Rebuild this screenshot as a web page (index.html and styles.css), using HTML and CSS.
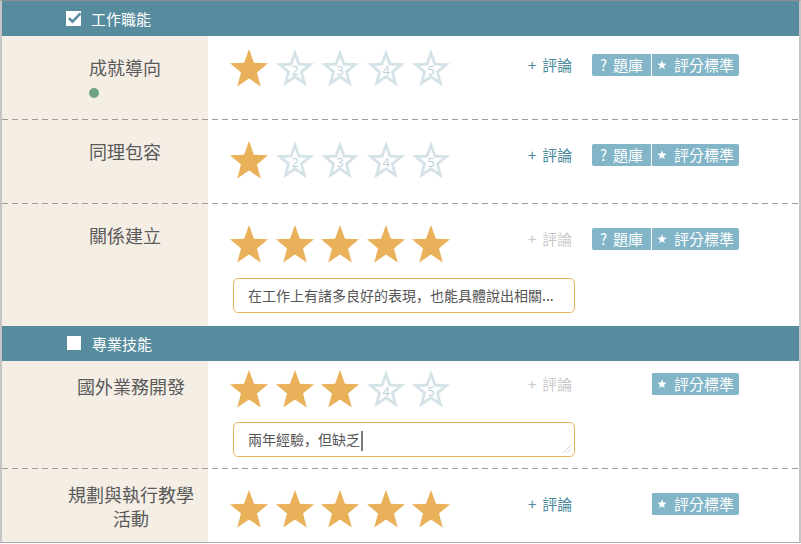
FILE: index.html
```html
<!DOCTYPE html>
<html>
  <head>
    <title>能力評分</title>
    <link rel="stylesheet" href="styles.css">
  </head>
  <body>
    <svg class="defs" aria-hidden="true">
      <defs>
        <path id="star-shape" d="M19 0.5 L23.7 13.03 L37.07 13.63 L26.61 21.97 L30.17 34.87 L19 27.5 L7.83 34.87 L11.39 21.97 L0.93 13.63 L14.3 13.03 Z"/>
        <path id="mini-star" d="M5 0.3 L6.2 3.6 L9.7 3.7 L6.9 5.9 L7.9 9.3 L5 7.3 L2.1 9.3 L3.1 5.9 L0.3 3.7 L3.8 3.6 Z"/>
      </defs>
    </svg>

    <div class="sheet">

      <!-- 工作職能 -->
      <div class="group group--work">
        <div class="head">
          <svg class="check" viewBox="0 0 15 15">
            <rect width="15" height="15" fill="#fff"/>
            <path d="M3 7.2 L6.5 10.7 L14.5 2.5" fill="none" stroke="#568c9e" stroke-width="2.6"/>
          </svg>
          工作職能
        </div>

        <div class="row">
          <div class="label">
            <div class="name"><span class="name-in">成就導向<span class="dot"></span></span></div>
          </div>
          <div class="rating">
            <div class="line">
              <div class="stars" data-score="1"></div>
              <div class="comment"><span class="plus">+</span>評論</div>
              <div class="tools">
                <div class="btn btn-bank"><span>?</span>題庫</div>
                <div class="btn btn-rule"><svg class="mini" viewBox="0 0 10 10"><use href="#mini-star"/></svg>評分標準</div>
              </div>
            </div>
          </div>
        </div>

        <div class="row">
          <div class="label">
            <div class="name"><span class="name-in">同理包容</span></div>
          </div>
          <div class="rating">
            <div class="line">
              <div class="stars" data-score="1"></div>
              <div class="comment"><span class="plus">+</span>評論</div>
              <div class="tools">
                <div class="btn btn-bank"><span>?</span>題庫</div>
                <div class="btn btn-rule"><svg class="mini" viewBox="0 0 10 10"><use href="#mini-star"/></svg>評分標準</div>
              </div>
            </div>
          </div>
        </div>

        <div class="row">
          <div class="label">
            <div class="name"><span class="name-in">關係建立</span></div>
          </div>
          <div class="rating">
            <div class="line">
              <div class="stars" data-score="5"></div>
              <div class="comment off"><span class="plus">+</span>評論</div>
              <div class="tools">
                <div class="btn btn-bank"><span>?</span>題庫</div>
                <div class="btn btn-rule"><svg class="mini" viewBox="0 0 10 10"><use href="#mini-star"/></svg>評分標準</div>
              </div>
            </div>
            <div class="note">在工作上有諸多良好的表現<span class="punct">，</span>也能具體說出相關...</div>
          </div>
        </div>
      </div>

      <!-- 專業技能 -->
      <div class="group group--skills">
        <div class="head">
          <span class="box"></span>
          專業技能
        </div>

        <div class="row">
          <div class="label">
            <div class="name"><span class="name-in">國外業務開發</span></div>
          </div>
          <div class="rating">
            <div class="line">
              <div class="stars" data-score="3"></div>
              <div class="comment off"><span class="plus">+</span>評論</div>
              <div class="tools">
                <div class="btn btn-rule"><svg class="mini" viewBox="0 0 10 10"><use href="#mini-star"/></svg>評分標準</div>
              </div>
            </div>
            <div class="note">兩年經驗<span class="punct">，</span>但缺乏<span class="caret"></span>
              <svg class="grip" viewBox="0 0 12 12">
                <path d="M11 3 L3 11 M11 7 L7 11" stroke="#d2d2d2" stroke-width="1"/>
              </svg>
            </div>
          </div>
        </div>

        <div class="row">
          <div class="label">
            <div class="name"><span class="name-in">規劃與執行教學活動</span></div>
          </div>
          <div class="rating">
            <div class="line">
              <div class="stars" data-score="5"></div>
              <div class="comment"><span class="plus">+</span>評論</div>
              <div class="tools">
                <div class="btn btn-rule"><svg class="mini" viewBox="0 0 10 10"><use href="#mini-star"/></svg>評分標準</div>
              </div>
            </div>
          </div>
        </div>
      </div>

    </div>

    <script>
    // build the five stars of every rating from its score
    const NS = 'http://www.w3.org/2000/svg';

    function makeStar(n, filled) {
      const svg = document.createElementNS(NS, 'svg');
      svg.setAttribute('viewBox', '0.93 0.5 36.14 34.37');
      svg.setAttribute('preserveAspectRatio', 'none');
      svg.classList.add('star', filled ? 'on' : 'off');

      const rim = document.createElementNS(NS, 'use');
      rim.setAttribute('href', '#star-shape');
      svg.appendChild(rim);

      if (!filled) {
        const hole = document.createElementNS(NS, 'use');
        hole.setAttribute('href', '#star-shape');
        hole.setAttribute('class', 'hole');
        hole.setAttribute('transform', 'translate(19 19.5) scale(.6) translate(-19 -19.5)');
        svg.appendChild(hole);

        const num = document.createElementNS(NS, 'text');
        num.setAttribute('x', '19');
        num.setAttribute('y', '24.3');
        num.textContent = n;
        svg.appendChild(num);
      }
      return svg;
    }

    document.querySelectorAll('.stars').forEach(box => {
      const score = parseInt(box.getAttribute('data-score'));
      for (let i = 1; i <= 5; i++) {
        box.appendChild(makeStar(i, i <= score));
      }
    });
    </script>
  </body>
</html>
```

FILE: styles.css
```css
* {
  box-sizing: border-box;
}

body {
  margin: 0;
  font-family: "Noto Sans CJK TC", "Noto Sans", sans-serif;
  color: #555;
}

.defs {
  display: block;
  width: 0;
  height: 0;
  overflow: hidden;
}

.sheet {
  width: 801px;
  height: 543px;
  overflow: hidden;
  border-style: solid;
  border-width: 1px 2px 1px 2px;
  border-color: #8f8f8f #c6c6c6 #a8a8a8 #c6c6c6;
  background: linear-gradient(to right, #f5eee5 206px, #fff 206px);
}

/* section header */
.head {
  height: 35px;
  display: flex;
  align-items: center;
  gap: 10px;
  padding-left: 64px;
  background-color: #568c9e;
  color: #fff;
  font-size: 15px;
}

.check {
  width: 15px;
  height: 15px;
  display: block;
}

.box {
  width: 14px;
  height: 14px;
  margin-left: 1px;
  margin-right: 1px;
  background-color: #fff;
}

/* rows */
.row {
  display: grid;
  grid-template-columns: 206px 1fr;
  min-height: 84px;
}

.head + .row {
  min-height: 83px;
}

.row + .row {
  padding-top: 1px;
  background: repeating-linear-gradient(to right, #9d9d9d 0 6px, transparent 6px 10px) top left / 100% 1px no-repeat;
}

.label {
  padding-top: 19px;
  padding-left: 58px;
}

.group--skills .label {
  padding-top: 13px;
  padding-left: 64px;
}

.name {
  width: 130px;
  text-align: center;
  font-size: 18px;
  line-height: 24px;
  color: #5a5a5a;
}

.name-in {
  display: inline-block;
}

.dot {
  display: block;
  width: 10px;
  height: 10px;
  margin-top: 9px;
  border-radius: 50%;
  background-color: #6ea383;
}

/* right side */
.rating {
  padding: 21px 0 13px 22px;
}

.head + .row .rating {
  padding-top: 13px;
}

.group--skills .rating {
  padding-bottom: 11px;
}

.group--skills .head + .row .rating {
  padding-top: 9px;
}

.line {
  display: flex;
  align-items: flex-start;
}

.stars {
  display: flex;
  gap: 7.5px;
  width: 220px;
}

.star {
  display: block;
  width: 38px;
  height: 37.5px;
}

.star.on {
  fill: #e8b15a;
}

.star.off {
  fill: #d5e3e9;
}

.star .hole {
  fill: #fff;
}

.star text {
  font-family: "Open Sans", Lato, sans-serif;
  font-size: 12px;
  text-anchor: middle;
  fill: #bccfd8;
}

.comment {
  width: 64px;
  margin-left: 78px;
  margin-top: 3px;
  font-size: 15px;
  line-height: 22px;
  color: #4d899d;
}

.comment.off {
  color: #cacaca;
}

.group--work .head + .row .comment,
.group--work .head + .row .tools {
  margin-top: 5px;
}

.plus {
  margin-right: 6px;
}

.tools {
  display: flex;
  justify-content: flex-end;
  gap: 1px;
  width: 147px;
  margin-top: 3px;
}

.btn {
  height: 22px;
  display: flex;
  align-items: center;
  justify-content: center;
  gap: 6px;
  background-color: #82b5c7;
  color: #fff;
  font-size: 15px;
  line-height: 22px;
}

.btn-bank {
  width: 59px;
  border-radius: 2px 0 0 2px;
}

.btn-rule {
  width: 87px;
  gap: 7px;
  border-radius: 0 2px 2px 0;
}

.mini {
  width: 10px;
  height: 10px;
  fill: #fff;
}

/* comment box */
.note {
  position: relative;
  width: 342px;
  height: 35px;
  margin: 15px 0 0 3px;
  padding: 0 14px;
  border: 1px solid #e9b35e;
  border-radius: 5px;
  font-size: 14px;
  line-height: 33px;
  color: #555;
  white-space: nowrap;
  overflow: hidden;
}

.punct {
  font-family: "Noto Sans CJK SC", sans-serif;
}

.caret {
  display: inline-block;
  width: 2px;
  height: 20px;
  margin-left: 1px;
  vertical-align: middle;
  background-color: #7a7a7a;
}

.grip {
  position: absolute;
  right: 2px;
  bottom: 2px;
  width: 12px;
  height: 12px;
}
```
